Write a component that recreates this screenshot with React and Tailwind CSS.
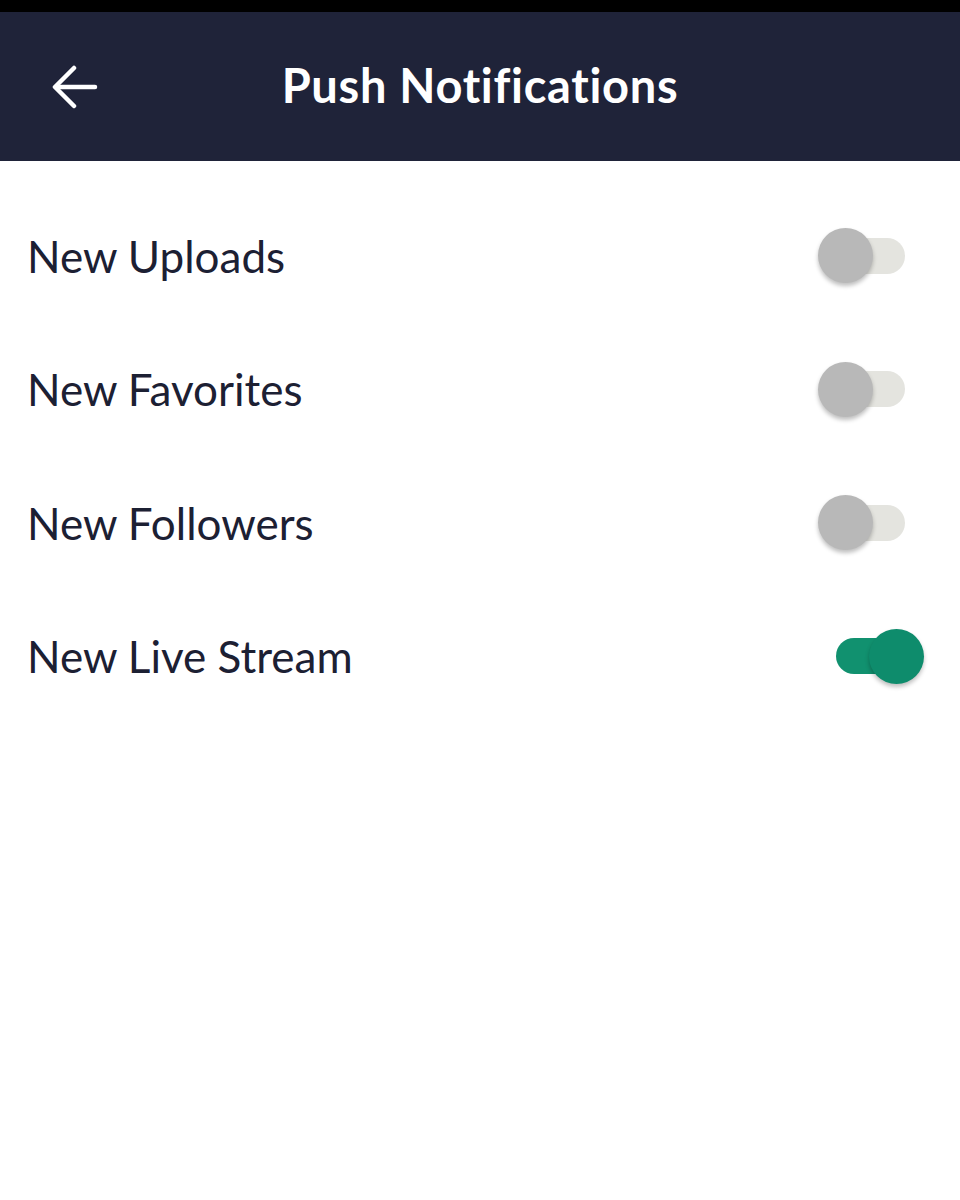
import React from "react";

function Toggle({ on }) {
  return (
    <div className="relative w-[106px] h-[56px] flex items-center">
      <div
        className={
          "absolute left-[18px] w-[69px] h-[36px] rounded-full " +
          (on ? "bg-[#11916f]" : "bg-[#e4e4df]")
        }
      />
      <div
        className={
          "absolute w-[55px] h-[55px] rounded-full shadow-[0_3px_4px_rgba(0,0,0,0.25)] " +
          (on ? "left-[51px] bg-[#0e8c6c]" : "left-0 bg-[#b8b8b8]")
        }
      />
    </div>
  );
}

const rows = [
  { label: "New Uploads", on: false },
  { label: "New Favorites", on: false },
  { label: "New Followers", on: false },
  { label: "New Live Stream", on: true },
];

export default function App() {
  return (
    <div className="w-[960px] h-[1200px] bg-white flex flex-col" style={{ fontFamily: "Lato, 'Open Sans', sans-serif" }}>
      <div className="h-[12px] bg-black" />
      <div className="h-[149px] bg-[#1f2339] flex items-center relative">
        <div className="absolute left-[52px] top-[52px]">
          <svg width="46" height="46" viewBox="0 0 46 46" fill="none" stroke="white" strokeWidth="4.5" strokeLinecap="round" strokeLinejoin="round">
            <path d="M43 23H4" />
            <path d="M22 4L3 23l19 19" />
          </svg>
        </div>
        <div className="w-full text-center text-white font-bold text-[47px] tracking-[0.7px] pb-[2px]">Push Notifications</div>
      </div>
      <div className="flex flex-col pt-[28px]">
        {rows.map((r) => (
          <div key={r.label} className="h-[133.5px] flex items-center justify-between pl-[27px] pr-[36px]">
            <span className="text-[44px] text-[#1c2033] tracking-[0px]">{r.label}</span>
            <Toggle on={r.on} />
          </div>
        ))}
      </div>
    </div>
  );
}
